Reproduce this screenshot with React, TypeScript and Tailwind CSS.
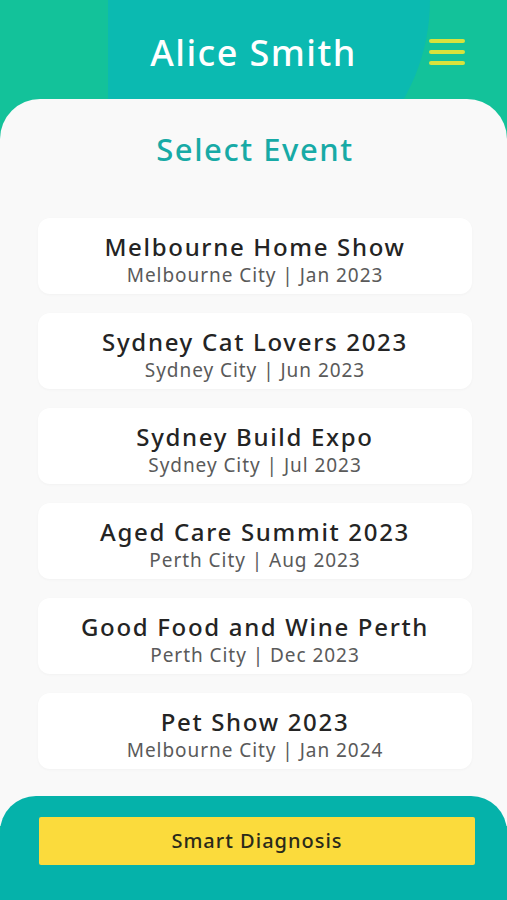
import React from "react";

type EventItem = { title: string; place: string; date: string };

const events: EventItem[] = [
  { title: "Melbourne Home Show", place: "Melbourne City", date: "Jan 2023" },
  { title: "Sydney Cat Lovers 2023", place: "Sydney City", date: "Jun 2023" },
  { title: "Sydney Build Expo", place: "Sydney City", date: "Jul 2023" },
  { title: "Aged Care Summit 2023", place: "Perth City", date: "Aug 2023" },
  { title: "Good Food and Wine Perth", place: "Perth City", date: "Dec 2023" },
  { title: "Pet Show 2023", place: "Melbourne City", date: "Jan 2024" },
];

const EventCard: React.FC<{ item: EventItem }> = ({ item }) => (
  <button className="flex h-[76px] w-full flex-col items-center justify-center rounded-xl bg-white pt-[6px] shadow-[0_1px_3px_rgba(0,0,0,0.03)]">
    <span className="text-[24px] leading-[32px] font-medium tracking-[0.07em] text-[#242424]">
      {item.title}
    </span>
    <span className="text-[19px] leading-[24px] tracking-[0.05em] text-[#5a5a5a]">
      {item.place} | {item.date}
    </span>
  </button>
);

const App: React.FC = () => {
  return (
    <div
      className="relative flex h-[900px] w-[507px] flex-col overflow-hidden bg-[#13c29a]"
      style={{ fontFamily: '"Noto Sans", Lato, sans-serif' }}
    >
      {/* header blob */}
      <div className="absolute left-[108px] top-[-200px] h-[400px] w-[322px] rounded-r-[200px] bg-[#0bbab1]" />

      <header className="relative flex h-[99px] items-center justify-center pt-[6px]">
        <h1 className="text-[36px] font-medium tracking-[0.04em] text-white">Alice Smith</h1>
        <button className="absolute right-[42px] top-[39px] flex w-[36px] flex-col gap-[7px]">
          <span className="h-[4px] rounded-full bg-[#d8e23c]" />
          <span className="h-[4px] rounded-full bg-[#d8e23c]" />
          <span className="h-[4px] rounded-full bg-[#d8e23c]" />
        </button>
      </header>

      <main className="relative flex flex-1 flex-col rounded-t-[40px] bg-[#f9f9f9] pl-[38px] pr-[35px] pb-6">
        <h2 className="mt-[27px] text-center text-[31px] font-medium tracking-[0.05em] text-[#17aaa6]">
          Select Event
        </h2>
        <div className="mt-[45px] flex flex-col gap-[19px]">
          {events.map((e) => (
            <EventCard key={e.title} item={e} />
          ))}
        </div>
      </main>

      <footer className="relative -mt-[30px] flex h-[104px] flex-col rounded-t-[36px] bg-[#05b2aa] px-[39px] pt-[21px]">
        <button className="h-[48px] w-[436px] rounded-[2px] bg-[#fbdb3c] text-[20px] font-medium tracking-[0.05em] text-[#2a2a1a]">
          Smart Diagnosis
        </button>
      </footer>
    </div>
  );
};

export default App;
